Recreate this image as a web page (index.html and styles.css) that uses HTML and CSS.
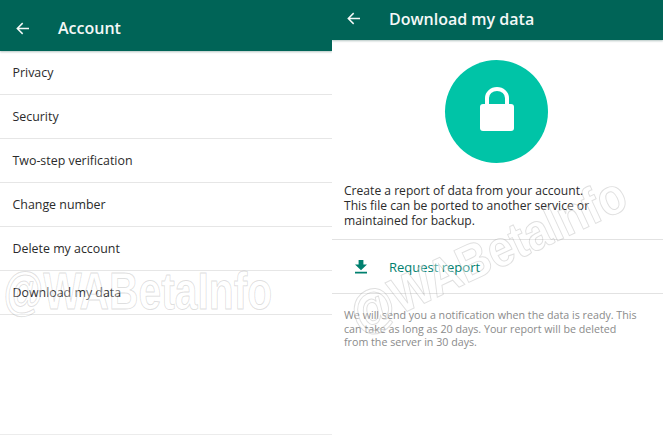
FILE: index.html
```html
<!DOCTYPE html>
<html lang="en">
<head>
<meta charset="utf-8">
<title>Account and Download my data</title>
<link rel="stylesheet" href="styles.css">
</head>
<body>
<div class="app">
  <section class="panel">
    <header class="bar bar-account">
      <svg class="back" viewBox="0 0 14 14" aria-hidden="true"><path d="M14 7H1.5M7.2 1.2 1.4 7l5.8 5.8"/></svg>
      <h1 class="bar-title">Account</h1>
    </header>
    <ul class="menu">
      <li class="menu-item">Privacy</li>
      <li class="menu-item">Security</li>
      <li class="menu-item">Two-step verification</li>
      <li class="menu-item">Change number</li>
      <li class="menu-item">Delete my account</li>
      <li class="menu-item">Download my data</li>
    </ul>
    <div class="mark mark-flat">@WABetaInfo</div>
  </section>
  <section class="panel panel-right">
    <header class="bar bar-data">
      <svg class="back" viewBox="0 0 14 14" aria-hidden="true"><path d="M14 7H1.5M7.2 1.2 1.4 7l5.8 5.8"/></svg>
      <h1 class="bar-title">Download my data</h1>
    </header>
    <div class="hero">
      <div class="circle">
        <svg class="lock" viewBox="0 0 34 44" aria-hidden="true">
          <path class="shackle" d="M7 20V11a10 9 0 0 1 20 0V20"/>
          <rect class="lock-body" x="0" y="17" width="34" height="27" rx="3"/>
        </svg>
      </div>
    </div>
    <p class="intro">Create a report of data from your account. This file can be ported to another service or maintained for backup.</p>
    <div class="action">
      <svg class="dl" viewBox="0 0 12 14" aria-hidden="true"><path d="M3.6 0h4.8v4.6H12L6 10.2 0 4.6h3.6zM0 11.8h12V13.4H0z"/></svg>
      <span class="action-label">Request report</span>
    </div>
    <p class="note">We will send you a notification when the data is ready. This can take as long as 20 days. Your report will be deleted from the server in 30 days.</p>
    <div class="mark mark-tilt">@WABetaInfo</div>
  </section>
</div>
</body>
</html>
```

FILE: styles.css
```css
* { box-sizing: border-box; }
html, body { margin: 0; padding: 0; background: #fff; }
body { font-family: "Open Sans", "Noto Sans", sans-serif; overflow: hidden; }
.app { display: flex; width: 663px; height: 435px; }
.panel { position: relative; width: 332px; height: 435px; overflow: hidden; border-bottom: 1px solid #ececec; }
.panel-right { width: 331px; border: 0; }
.bar { display: flex; align-items: center; background: #006457; color: #f4f8f7; box-shadow: 0 1px 2px rgba(0,60,50,.3); }
.bar-account { height: 51px; padding: 5px 0 0 16px; }
.bar-data { height: 40px; padding: 0 0 3px 15px; }
.back { width: 13px; height: 13px; flex: none; fill: none; stroke: #f4f8f7; stroke-width: 1.6; }
.bar-title { margin: 0 0 0 29px; font-size: 16px; font-weight: 600; line-height: 20px; }
.menu { list-style: none; margin: 0; padding: 0; }
.menu-item { display: flex; align-items: center; height: 44px; padding: 0 0 1px 12.5px; border-bottom: 1px solid #e6e6e6; font-size: 12.4px; color: #2b2b2b; }
.hero { display: flex; justify-content: center; padding: 20px 2px 0 0; }
.circle { display: flex; align-items: center; justify-content: center; width: 103px; height: 103px; padding-bottom: 5px; border-radius: 50%; background: #00c4a7; }
.lock { width: 34px; height: 44px; }
.shackle { fill: none; stroke: #fff; stroke-width: 4; }
.lock-body { fill: #fff; }
.intro { margin: 0; padding: 21px 60px 0 12px; height: 76px; font-size: 12.1px; line-height: 14.8px; color: #2b2b2b; }
.action { display: flex; align-items: center; height: 55px; padding-left: 23px; border-top: 1px solid #e2e2e2; border-bottom: 1px solid #e2e2e2; }
.dl { width: 12px; height: 14px; fill: #00806f; flex: none; }
.action-label { margin-left: 22px; font-size: 13px; color: #00806f; }
.note { margin: 15px 0 0; padding: 0 24px 0 12px; font-size: 10.7px; line-height: 13.5px; color: #8b8b8b; }
.mark { position: absolute; width: 335px; font-family: "Liberation Sans", sans-serif; font-size: 51px; line-height: 50px; font-weight: 700; color: rgba(255,255,255,.35); -webkit-text-stroke: 1px rgba(110,110,110,.22); white-space: nowrap; pointer-events: none; }
.mark-flat { left: -30px; top: 267px; transform: scaleX(.8); }
.mark-tilt { left: -12px; top: 230px; transform: rotate(-25deg) scaleX(.89); }
```
